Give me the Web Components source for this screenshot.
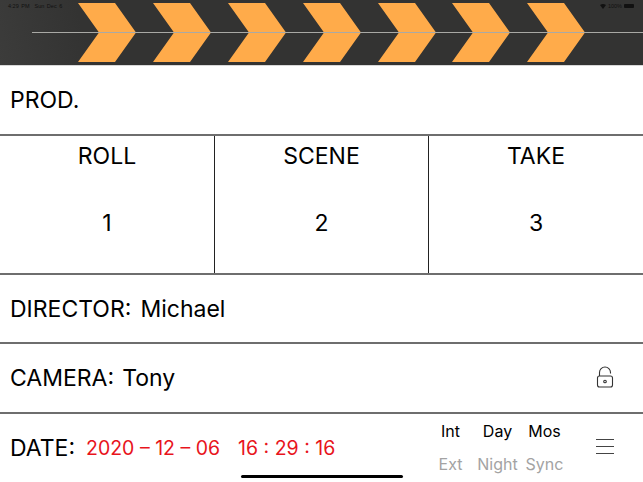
<!DOCTYPE html>
<html>
<head>
<style>
html, body { margin: 0; padding: 0; background: #fff; }
body { width: 643px; height: 482px; overflow: hidden; font-family: Inter, "Liberation Sans", Arial, sans-serif; color: #000; }
.name { margin-left: 9px; }
</style>
<script>
// small helper so each class stays short
function shadow(el, html) {
  el.attachShadow({mode: 'open'}).innerHTML = html;
}

customElements.define('clap-stripes', class extends HTMLElement {
  constructor() {
    super();
    let chevrons = '';
    for (const x of [78, 153, 228, 303, 378, 452, 527]) {
      chevrons += `<polygon points="${x},3 ${x+37},3 ${x+58},32.5 ${x+37},62 ${x},62 ${x+21},32.5"/>`;
    }
    shadow(this, `
      <style>
        :host { display: block; height: 65px; position: relative; background: linear-gradient(75deg, #3c3c3b, #333332 14%); border-bottom: 1px solid #d8d8d8; }
        svg { display: block; }
        polygon { fill: #ffab4a; }
        .status { position: absolute; top: 3px; font: 5.5px "Liberation Sans", sans-serif; color: #111; }
        .left { left: 8px; word-spacing: 1px; }
        .right { right: 9px; display: flex; align-items: center; gap: 2px; }
        .batt { width: 10px; height: 4px; background: #111; border-radius: 1px; }
      </style>
      <svg width="643" height="65" viewBox="0 0 643 65">
        ${chevrons}
        <line x1="32" y1="32.5" x2="643" y2="32.5" stroke="#a9a9a5" stroke-width="1"/>
      </svg>
      <div class="status left">4:29 PM&nbsp; Sun Dec 6</div>
      <div class="status right">
        <svg width="6" height="5" viewBox="0 0 6 5"><path d="M0 1 Q3 -1 6 1 L3 5Z" fill="#111"/></svg>
        <span>100%</span><span class="batt"></span>
      </div>
    `);
  }
});

customElements.define('slate-row', class extends HTMLElement {
  constructor() {
    super();
    shadow(this, `
      <style>
        :host { display: flex; align-items: center; box-sizing: border-box; height: 69px; padding-left: 10px; border-bottom: 2px solid #6e6e6e; font-size: 23px; }
        ::slotted([slot=end]) { margin-left: auto; }
      </style>
      <slot></slot><slot name="end"></slot>
    `);
  }
});

customElements.define('slate-cell', class extends HTMLElement {
  constructor() {
    super();
    shadow(this, `
      <style>
        :host { display: flex; flex-direction: column; align-items: center; font-size: 23px; }
        .label { margin-top: 7px; height: 26px; line-height: 26px; }
        .value { margin-top: 41px; height: 26px; line-height: 26px; }
      </style>
      <div class="label"><slot name="label"></slot></div>
      <div class="value"><slot name="value"></slot></div>
    `);
  }
});

customElements.define('slate-grid', class extends HTMLElement {
  constructor() {
    super();
    shadow(this, `
      <style>
        :host { display: grid; grid-template-columns: 214px 213px 1fr; gap: 0 1px; background: #222; box-sizing: border-box; border-bottom: 2px solid #6e6e6e; height: 139px; }
        ::slotted(*) { background: #fff; }
      </style>
      <slot></slot>
    `);
  }
});

customElements.define('lock-icon', class extends HTMLElement {
  constructor() {
    super();
    shadow(this, `
      <style>:host { display: block; width: 18px; height: 22px; margin: -3px 29px 0 0; } svg { display: block; }</style>
      <svg width="18" height="22" viewBox="0 0 18 22" fill="none" stroke="#333" stroke-width="1.1">
        <path d="M3.5 10 V6.5 a5.5 5.5 0 0 1 11 0 V7.5"/>
        <rect x="1.5" y="10" width="15" height="11" rx="2"/>
        <circle cx="9" cy="15.5" r="1.3"/>
      </svg>
    `);
  }
});

customElements.define('scene-flags', class extends HTMLElement {
  constructor() {
    super();
    shadow(this, `
      <style>
        :host { display: grid; grid-template-columns: repeat(3, 47px); grid-template-rows: 33px 33px; justify-items: center; align-items: center; margin: -2px 0 0 auto; font-size: 16px; }
        .off { color: #a3a3a3; }
      </style>
      <span>Int</span><span>Day</span><span>Mos</span>
      <span class="off">Ext</span><span class="off">Night</span><span class="off">Sync</span>
    `);
  }
});

customElements.define('menu-icon', class extends HTMLElement {
  constructor() {
    super();
    shadow(this, `
      <style>
        :host { display: flex; flex-direction: column; gap: 6px; width: 18px; margin: -4px 29px 0 28px; }
        i { display: block; height: 1px; background: #444; }
      </style>
      <i></i><i></i><i></i>
    `);
  }
});

customElements.define('home-bar', class extends HTMLElement {
  constructor() {
    super();
    shadow(this, `
      <style>:host { position: absolute; left: 241px; top: 475px; width: 162px; height: 3px; border-radius: 2px; background: #000; }</style>
    `);
  }
});

customElements.define('date-row', class extends HTMLElement {
  constructor() {
    super();
    shadow(this, `
      <style>
        :host { display: flex; align-items: center; height: 68px; padding-left: 10px; font-size: 23px; }
        .stamp { color: #e8141c; font-size: 19.5px; margin-left: 11px; white-space: pre; }
        .time { margin-left: 18px; }
      </style>
      <span>DATE:</span>
      <span class="stamp">2020 – 12 – 06</span>
      <span class="stamp time">16 : 29 : 16</span>
      <scene-flags></scene-flags>
      <menu-icon></menu-icon>
    `);
  }
});
</script>
</head>
<body>
<clap-stripes></clap-stripes>
<slate-row style="height:70px">PROD.</slate-row>
<slate-grid>
  <slate-cell><span slot="label">ROLL</span><span slot="value">1</span></slate-cell>
  <slate-cell><span slot="label">SCENE</span><span slot="value">2</span></slate-cell>
  <slate-cell><span slot="label">TAKE</span><span slot="value">3</span></slate-cell>
</slate-grid>
<slate-row>DIRECTOR:<span class="name">Michael</span></slate-row>
<slate-row style="height:70px">CAMERA:<span class="name" style="margin-left:8px">Tony</span><lock-icon slot="end"></lock-icon></slate-row>
<date-row></date-row>
<home-bar></home-bar>
</body>
</html>
